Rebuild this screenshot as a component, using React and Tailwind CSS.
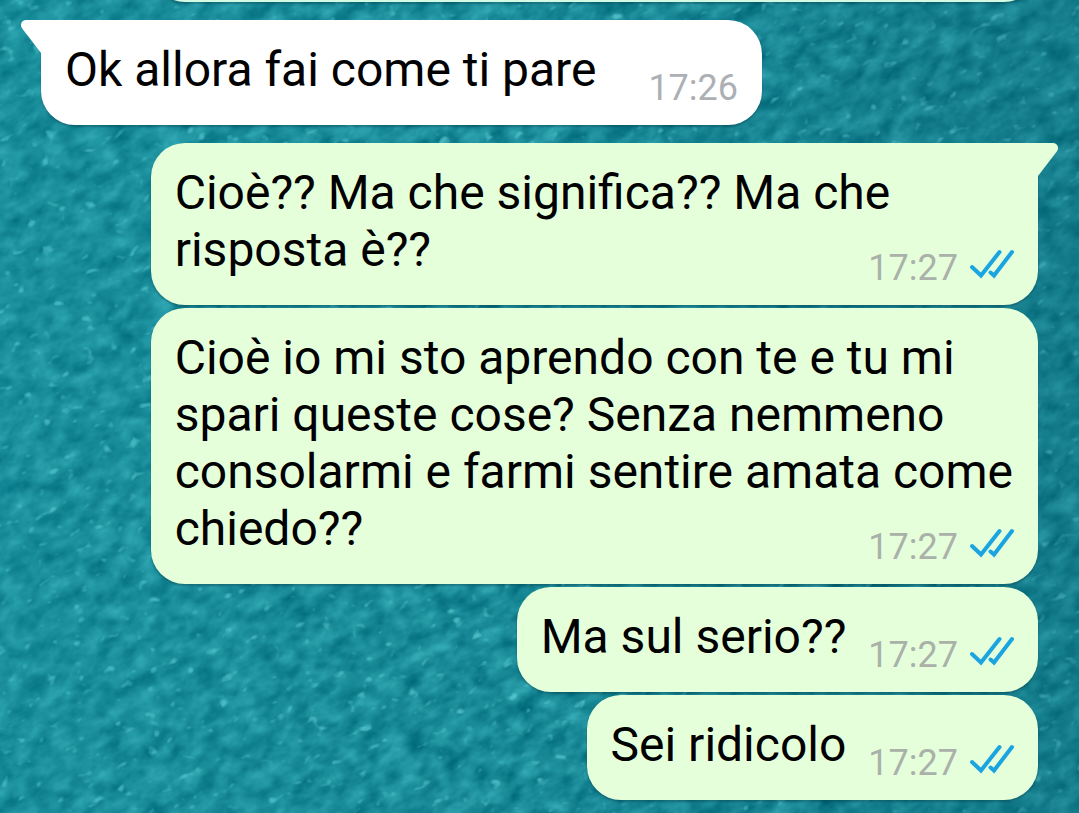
import React from 'react'

const messages = [
  { id: 1, mine: false, tail: true, text: 'Ok allora fai come ti pare', time: '17:26' },
  { id: 2, mine: true, tail: true, text: 'Cioè?? Ma che significa?? Ma che risposta è??', time: '17:27' },
  { id: 3, mine: true, tail: false, text: 'Cioè io mi sto aprendo con te e tu mi spari queste cose? Senza nemmeno consolarmi e farmi sentire amata come chiedo??', time: '17:27' },
  { id: 4, mine: true, tail: false, text: 'Ma sul serio??', time: '17:27' },
  { id: 5, mine: true, tail: false, text: 'Sei ridicolo', time: '17:27' },
]

// Rough teal sponge texture behind the chat
function Wallpaper() {
  return (
    <div className="absolute inset-0 overflow-hidden bg-[#158592]">
      <svg className="absolute -top-1/2 -left-1/4 w-[150%] h-[200%] -rotate-[28deg]" aria-hidden="true">
        <filter id="sponge" x="0" y="0" width="100%" height="100%" colorInterpolationFilters="sRGB">
          <feTurbulence type="fractalNoise" baseFrequency="0.045 0.065" numOctaves="3" seed="11" />
          <feColorMatrix
            values="0.26 0.08 0 0 -0.07
                    0.32 0.1 0 0 0.33
                    0.29 0.1 0 0 0.4
                    0 0 0 0 1"
          />
        </filter>
        <filter id="sparkle" x="0" y="0" width="100%" height="100%" colorInterpolationFilters="sRGB">
          <feTurbulence type="fractalNoise" baseFrequency="0.07 0.1" numOctaves="2" seed="4" />
          <feColorMatrix
            values="0 0 0 0 0.42
                    0 0 0 0 0.84
                    0 0 0 0 0.87
                    0 6 0 0 -4"
          />
        </filter>
        <rect width="100%" height="100%" filter="url(#sponge)" />
        <rect width="100%" height="100%" filter="url(#sparkle)" opacity="0.6" />
      </svg>
      <div className="absolute inset-0 bg-linear-to-r from-[#1fa3ae]/20 via-transparent to-[#075c6c]/30" />
    </div>
  )
}

function Tail({ mine }) {
  if (mine) {
    return (
      <svg className="absolute top-0 -right-5 w-[21px] h-[34px]" viewBox="0 0 21 34" aria-hidden="true">
        <path d="M0 0H15.5C20.5 0 22.5 4.5 19.8 8.5L1 33L0 33Z" fill="#e5ffdb" />
      </svg>
    )
  }
  return (
    <svg className="absolute top-0 -left-5 w-[21px] h-[34px]" viewBox="0 0 21 34" aria-hidden="true">
      <path d="M21 0H5.5C0.5 0 -1.5 4.5 1.2 8.5L20 33L21 33Z" fill="#ffffff" />
    </svg>
  )
}

function ReadTicks() {
  return (
    <svg className="w-11 h-8" viewBox="0 0 44 32" fill="none" stroke="#1ba5e0" strokeWidth="4" strokeLinecap="round" role="img" aria-label="Letto">
      <path d="M2 18L11 26.5L29.5 3" />
      <path d="M20.5 23.5L24 26.5L42 3" />
    </svg>
  )
}

function Message({ message }) {
  const { mine, tail, text, time } = message
  const side = mine ? 'self-end bg-[#e5ffdb]' : 'self-start bg-white'
  const gap = tail ? 'mt-[18px]' : 'mt-[3px]'
  let corner = 'rounded-[34px]'
  if (tail) corner = mine ? 'rounded-[34px] rounded-tr-none' : 'rounded-[34px] rounded-tl-none'

  return (
    <li className={`relative max-w-[89%] pt-[21px] pb-[27px] px-6 shadow-[0_2px_2px_rgba(0,50,60,0.35)] ${side} ${gap} ${corner}`}>
      {tail && <Tail mine={mine} />}
      <p className="flow-root text-[48px] leading-[57px] text-black">
        {text}
        <span className={`float-right h-[57px] flex items-end gap-3 text-[36px] leading-[42px] ${mine ? 'ml-[22px] text-[#a9b1a9]' : 'ml-[52px] text-[#acb0b4]'}`}>
          <time className="-mb-[11px]">{time}</time>
          {mine && <span className="-mb-[3px]"><ReadTicks /></span>}
        </span>
      </p>
    </li>
  )
}

export default function App() {
  return (
    <main className="relative min-h-screen overflow-hidden font-['Roboto',sans-serif]">
      <Wallpaper />
      <ul className="relative flex flex-col px-[41px] pb-3">
        {/* bottom edge of the message scrolled out of view */}
        <li className="self-end w-[89%] h-[68px] -mt-[66px] rounded-[34px] bg-[#d3fbe3] shadow-[0_2px_2px_rgba(0,50,60,0.35)]" aria-hidden="true" />
        {messages.map(message => (
          <Message key={message.id} message={message} />
        ))}
      </ul>
    </main>
  )
}
